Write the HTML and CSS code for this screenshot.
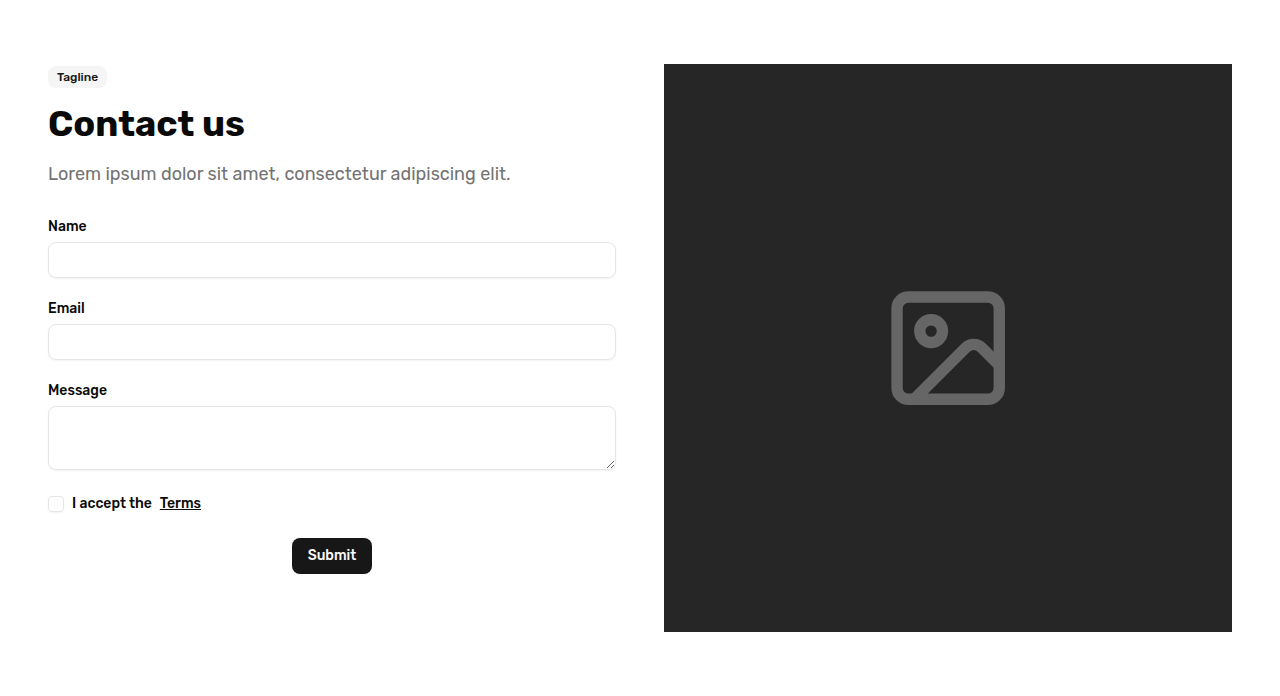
FILE: index.html
```html
<!DOCTYPE html>
<html lang="en">
<head>
<meta charset="utf-8">
<meta name="viewport" content="width=device-width, initial-scale=1">
<title>Contact us</title>
<link rel="stylesheet" href="styles.css">
</head>
<body>
<main class="contact">
  <section class="content">
    <header class="intro">
      <span class="badge">Tagline</span>
      <h1 class="title">Contact us</h1>
      <p class="lead">Lorem ipsum dolor sit amet, consectetur adipiscing elit.</p>
    </header>
    <form class="form">
      <div class="field">
        <label class="label" for="name">Name</label>
        <input class="input" id="name" type="text">
      </div>
      <div class="field">
        <label class="label" for="email">Email</label>
        <input class="input" id="email" type="email">
      </div>
      <div class="field">
        <label class="label" for="message">Message</label>
        <textarea class="input textarea" id="message"></textarea>
      </div>
      <div class="terms">
        <input class="checkbox" id="terms" type="checkbox">
        <label class="label terms-label" for="terms">I accept the <a class="link" href="#">Terms</a></label>
      </div>
      <button class="button" type="submit">Submit</button>
    </form>
  </section>
  <div class="media">
    <svg class="media-icon" viewBox="0 0 24 24" fill="none" stroke="currentColor" stroke-width="2" stroke-linecap="round" stroke-linejoin="round" aria-hidden="true">
      <rect width="18" height="18" x="3" y="3" rx="2" ry="2"/>
      <circle cx="9" cy="9" r="2"/>
      <path d="m21 15-3.086-3.086a2 2 0 0 0-2.828 0L6 21"/>
    </svg>
  </div>
</main>
</body>
</html>
```
FILE: styles.css
```css
*, *::before, *::after { box-sizing: border-box; }
body {
  margin: 0;
  background: #fff;
  color: #0a0a0a;
  font-family: Rubik, Roboto, Inter, sans-serif;
  font-size: 14px;
  line-height: 20px;
}
.contact {
  display: grid;
  grid-template-columns: 1fr 1fr;
  gap: 48px;
  padding: 64px 48px;
}
.content {
  display: flex;
  flex-direction: column;
  gap: 32px;
  padding-top: 2px;
}
.intro {
  display: flex;
  flex-direction: column;
  align-items: flex-start;
}
.badge {
  padding: 3px 9px;
  border-radius: 8px;
  background: #f5f5f5;
  color: #171717;
  font-size: 12px;
  font-weight: 500;
  line-height: 16px;
}
.title {
  margin: 16px 0;
  font-size: 36px;
  font-weight: 700;
  line-height: 40px;
}
.lead {
  margin: 0;
  color: #737373;
  font-size: 18px;
  line-height: 28px;
}
.form {
  display: flex;
  flex-direction: column;
  gap: 24px;
}
.field { display: flex; flex-direction: column; gap: 8px; }
.label { font-size: 14px; font-weight: 500; line-height: 14px; }
.input {
  display: block;
  width: 100%;
  height: 36px;
  padding: 8px 12px;
  border: 1px solid #e5e5e5;
  border-radius: 8px;
  background: transparent;
  box-shadow: 0 1px 2px rgb(0 0 0 / 5%);
  font: inherit;
}
.textarea { height: 64px; resize: vertical; }
.terms { display: flex; align-items: center; gap: 8px; }
.terms-label { display: flex; gap: 8px; line-height: 20px; }
.checkbox {
  appearance: none;
  width: 16px;
  height: 16px;
  margin: 0;
  border: 1px solid #e5e5e5;
  border-radius: 4px;
  box-shadow: 0 1px 2px rgb(0 0 0 / 5%);
}
.link { color: inherit; text-decoration: underline; }
.button {
  align-self: center;
  height: 36px;
  padding: 8px 16px;
  border: 0;
  border-radius: 8px;
  background: #171717;
  color: #fafafa;
  font: inherit;
  font-weight: 500;
}
.media {
  display: flex;
  align-items: center;
  justify-content: center;
  aspect-ratio: 1;
  background: #262626;
  color: #666;
}
.media-icon { width: 24%; }
```
